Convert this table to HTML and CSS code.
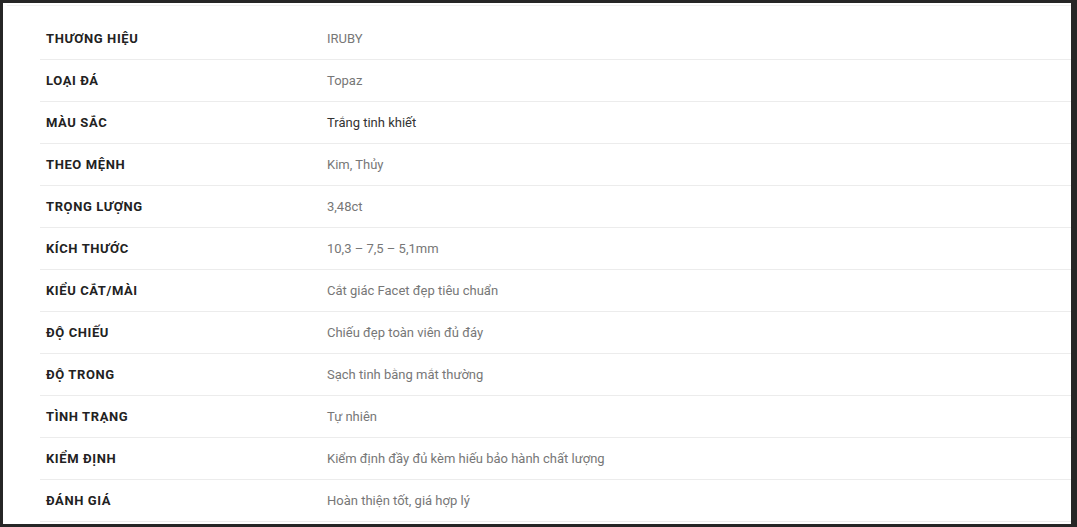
FILE: index.html
```html
<!DOCTYPE html>
<html lang="vi">
<head>
<meta charset="utf-8">
<link rel="stylesheet" href="styles.css">
</head>
<body>
<div class="frame">
  <div class="topline"></div>
  <table class="specs">
    <tr><th>Thương hiệu</th><td>IRUBY</td></tr>
    <tr><th>Loại đá</th><td>Topaz</td></tr>
    <tr><th>Màu sắc</th><td class="dark">Trắng tinh khiết</td></tr>
    <tr><th>Theo mệnh</th><td>Kim, Thủy</td></tr>
    <tr><th>Trọng lượng</th><td>3,48ct</td></tr>
    <tr><th>Kích thước</th><td>10,3 – 7,5 – 5,1mm</td></tr>
    <tr><th>Kiểu cắt/mài</th><td>Cắt giác Facet đẹp tiêu chuẩn</td></tr>
    <tr><th>Độ chiếu</th><td>Chiếu đẹp toàn viên đủ đáy</td></tr>
    <tr><th>Độ trong</th><td>Sạch tinh bằng mắt thường</td></tr>
    <tr><th>Tình trạng</th><td>Tự nhiên</td></tr>
    <tr><th>Kiểm định</th><td>Kiểm định đầy đủ kèm hiếu bảo hành chất lượng</td></tr>
    <tr><th>Đánh giá</th><td>Hoàn thiện tốt, giá hợp lý</td></tr>
  </table>
</div>
</body>
</html>
```
FILE: styles.css
```css
html, body {
  margin: 0;
  padding: 0;
  background: #262626;
}
body {
  padding: 3px 6px 3px 3px;
  height: 527px;
  box-sizing: border-box;
  overflow: hidden;
}
.frame {
  background: #fff;
  height: 521px;
  padding: 2px 0 0 0;
  box-sizing: border-box;
}
.topline {
  height: 1px;
  background: #f2f2f2;
  margin-left: 4px;
  margin-bottom: 11px;
}
.specs {
  border-collapse: collapse;
  margin-left: 37px;
  width: calc(100% - 37px);
  font-family: Roboto, "Liberation Sans", sans-serif;
  font-size: 13px;
}
.specs tr {
  height: 42px;
  border-bottom: 1px solid #ececec;
}
.specs th {
  text-align: left;
  width: 281px;
  padding: 1px 0 0 6px;
  text-transform: uppercase;
  font-weight: 700;
  letter-spacing: 0.6px;
  color: #222;
  vertical-align: middle;
}
.specs td {
  padding: 1px 0 0 0;
  color: #777;
  vertical-align: middle;
}
.specs td.dark {
  color: #333;
}
```
